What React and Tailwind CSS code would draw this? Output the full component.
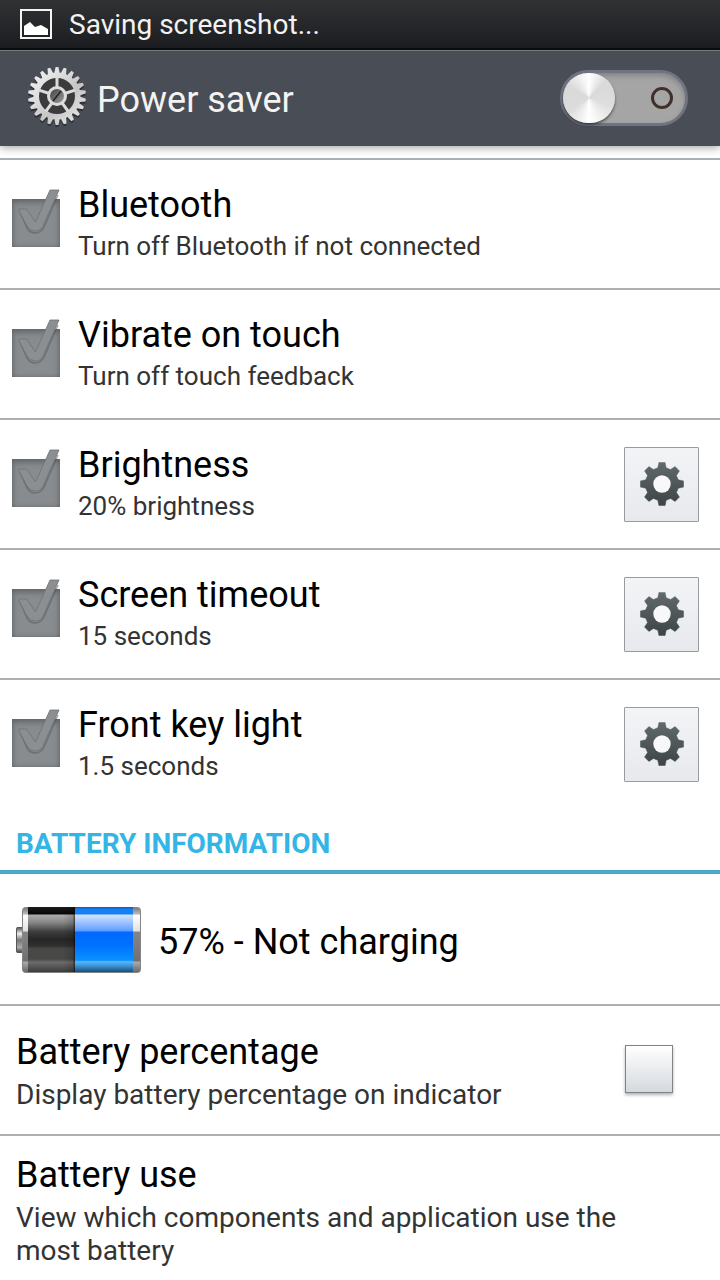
import React, { useState } from "react";

const savers = [
  { id: "bluetooth", title: "Bluetooth", summary: "Turn off Bluetooth if not connected" },
  { id: "vibrate", title: "Vibrate on touch", summary: "Turn off touch feedback" },
  { id: "brightness", title: "Brightness", summary: "20% brightness", settings: true },
  { id: "timeout", title: "Screen timeout", summary: "15 seconds", settings: true },
  { id: "keylight", title: "Front key light", summary: "1.5 seconds", settings: true },
];

// Outline of a cog centred on 0,0
// tip and root are the half widths of a tooth, in parts of one tooth's pitch
function cogPath(teeth, outer, inner, tip, root) {
  const pitch = (Math.PI * 2) / teeth;
  const points = [];
  for (let i = 0; i < teeth; i++) {
    const a = i * pitch - Math.PI / 2;
    [
      [inner, -root],
      [outer, -tip],
      [outer, tip],
      [inner, root],
    ].forEach(([r, off]) => {
      const t = a + off * pitch;
      points.push(`${(r * Math.cos(t)).toFixed(2)} ${(r * Math.sin(t)).toFixed(2)}`);
    });
  }
  return `M${points.join("L")}Z`;
}

function PictureIcon() {
  return (
    <svg viewBox="0 0 34 32" className="h-8 w-[34px]" aria-hidden="true">
      <rect x="2" y="2" width="30" height="28" fill="none" stroke="#f4f4f4" strokeWidth="2" />
      <path d="M5 27V18L11 14L16 19L22 17L29 21V27Z" fill="#fff" />
    </svg>
  );
}

function SettingsLogo() {
  return (
    <svg viewBox="-31 -31 62 62" className="mb-1 size-[62px] shrink-0" aria-hidden="true">
      <defs>
        <linearGradient id="metal" x1="0" y1="0" x2="1" y2="1">
          <stop offset="0" stopColor="#f4f4f4" />
          <stop offset="0.35" stopColor="#dedede" />
          <stop offset="0.6" stopColor="#c4c4c4" />
          <stop offset="1" stopColor="#f2f2f2" />
        </linearGradient>
        <linearGradient id="hub" x1="0" y1="0" x2="1" y2="1">
          <stop offset="0" stopColor="#444" />
          <stop offset="1" stopColor="#999" />
        </linearGradient>
      </defs>
      <path d={cogPath(22, 29, 23.5, 0.17, 0.4)} fill="#22252a" transform="translate(0 2)" opacity="0.7" />
      <path d={cogPath(22, 29, 23.5, 0.17, 0.4)} fill="url(#metal)" />
      <circle r="18" fill="#3b3b3d" />
      {[0, 72, 144, 216, 288].map((deg) => (
        <path key={deg} d="M0 -8V-19" stroke="#dcdcdc" strokeWidth="3" transform={`rotate(${deg})`} />
      ))}
      <circle r="10" fill="#dcdcdc" />
      <circle r="7" fill="url(#hub)" />
      <path d="M-4 5L4 -5" stroke="#222" strokeWidth="1.5" />
    </svg>
  );
}

function CogIcon() {
  return (
    <svg viewBox="-22 -22 44 44" className="size-11" aria-hidden="true">
      <defs>
        <linearGradient id="cog" x1="0" y1="0" x2="0" y2="1">
          <stop offset="0" stopColor="#616a6b" />
          <stop offset="1" stopColor="#3d4445" />
        </linearGradient>
      </defs>
      <path d={cogPath(8, 21.8, 16.8, 0.18, 0.32)} fill="url(#cog)" stroke="url(#cog)" strokeWidth="0.5" strokeLinejoin="round" />
      <circle r="8.7" fill="#f8f8fa" />
    </svg>
  );
}

function BatteryIcon() {
  return (
    <svg viewBox="0 0 126 68" className="h-[68px] w-[126px] shrink-0" role="img" aria-label="Battery level">
      <defs>
        <linearGradient id="case" x1="0" y1="0" x2="0" y2="1">
          <stop offset="0" stopColor="#777" />
          <stop offset="0.1" stopColor="#bbb" />
          <stop offset="0.12" stopColor="#fff" />
          <stop offset="0.36" stopColor="#e2e2e2" />
          <stop offset="0.38" stopColor="#858589" />
          <stop offset="0.82" stopColor="#707074" />
          <stop offset="0.84" stopColor="#aaa" />
          <stop offset="1" stopColor="#666" />
        </linearGradient>
        <linearGradient id="empty" x1="0" y1="0" x2="0" y2="1">
          <stop offset="0" stopColor="#1c1c1c" />
          <stop offset="0.1" stopColor="#080808" />
          <stop offset="0.13" stopColor="#aaa" />
          <stop offset="0.24" stopColor="#868686" />
          <stop offset="0.38" stopColor="#3c3c3c" />
          <stop offset="0.5" stopColor="#262626" />
          <stop offset="0.6" stopColor="#303030" />
          <stop offset="0.64" stopColor="#484846" />
          <stop offset="0.8" stopColor="#484848" />
          <stop offset="0.85" stopColor="#6c6c6c" />
          <stop offset="1" stopColor="#3c3c3c" />
        </linearGradient>
        <linearGradient id="charge" x1="0" y1="0" x2="0" y2="1">
          <stop offset="0" stopColor="#0b5cb4" />
          <stop offset="0.04" stopColor="#1680f5" />
          <stop offset="0.1" stopColor="#1680f5" />
          <stop offset="0.13" stopColor="#cfe1ff" />
          <stop offset="0.36" stopColor="#659fff" />
          <stop offset="0.39" stopColor="#0069ff" />
          <stop offset="0.6" stopColor="#0072ff" />
          <stop offset="0.82" stopColor="#0b92ff" />
          <stop offset="0.84" stopColor="#58b4ff" />
          <stop offset="0.9" stopColor="#3d97d8" />
          <stop offset="1" stopColor="#164f7c" />
        </linearGradient>
        <linearGradient id="shade" x1="0" y1="0" x2="1" y2="0">
          <stop offset="0" stopColor="#000" stopOpacity="0" />
          <stop offset="0.8" stopColor="#000" stopOpacity="0.15" />
          <stop offset="1" stopColor="#000" stopOpacity="0.6" />
        </linearGradient>
        <linearGradient id="nub" x1="0" y1="0" x2="0" y2="1">
          <stop offset="0" stopColor="#555" />
          <stop offset="0.25" stopColor="#eee" />
          <stop offset="0.5" stopColor="#777" />
          <stop offset="0.8" stopColor="#aaa" />
          <stop offset="1" stopColor="#444" />
        </linearGradient>
      </defs>
      <rect x="0.5" y="21.5" width="8" height="25" rx="1" fill="url(#nub)" stroke="#555" />
      <rect x="6.5" y="1.5" width="118" height="65" rx="3" fill="url(#case)" stroke="#858585" />
      <rect x="12" y="1" width="47" height="65" fill="url(#empty)" />
      <rect x="47" y="1" width="12" height="65" fill="url(#shade)" />
      <rect x="59" y="1" width="58" height="65" fill="url(#charge)" />
    </svg>
  );
}

function SaverRow({ saver, last }) {
  return (
    <li
      className={`flex h-[130px] items-center pl-3 pr-[21px] ${last ? "pb-0.5" : "border-b-2 border-[#abb0b4]"}`}
    >
      <div className="relative mb-0.5 size-12 shrink-0">
        <input
          id={saver.id}
          type="checkbox"
          defaultChecked
          disabled
          className="block size-12 appearance-none bg-[#888c8f] shadow-[inset_0_3px_6px_#606567,inset_0_0_4px_#707477]"
        />
        <svg viewBox="0 0 48 58" className="pointer-events-none absolute bottom-0 left-0 h-[58px] w-12" aria-hidden="true">
          <path d="M8 23L15 39Q18 44 23 44Q29 44 32 38L46 6" fill="none" stroke="#505558" strokeWidth="1.5" opacity="0.5" />
          <path
            d="M7 20H13Q15 20 16 22L23.5 33L38 1H47L31 37Q29 42 23 42Q18 42 15 37L7 22Z"
            fill="#8b8f92"
            stroke="#6c7174"
            strokeWidth="0.8"
          />
        </svg>
      </div>
      <label htmlFor={saver.id} className="ml-[18px] flex-1">
        <span className="block text-[36px] leading-[44px] text-black">{saver.title}</span>
        <span className="block text-[26px] leading-[38px] text-[#333]">{saver.summary}</span>
      </label>
      {saver.settings && (
        <button
          type="button"
          aria-label={`${saver.title} settings`}
          className="flex size-[75px] items-center justify-center rounded-[1px] border border-[#989ba2] bg-linear-to-b from-[#f3f4f6] to-[#e7e9ed]"
        >
          <CogIcon />
        </button>
      )}
    </li>
  );
}

export default function App() {
  const [enabled, setEnabled] = useState(false);
  const [showPercent, setShowPercent] = useState(false);

  return (
    <div className="min-h-screen overflow-hidden bg-white font-[Roboto,sans-serif]">
      <div className="flex h-[50px] items-center gap-4 border-b-2 border-[#0c0d0f] bg-linear-to-b from-[#303234] to-[#1c1d20] pl-[19px] text-[28px] text-[#f2f2f2]">
        <PictureIcon />
        <span className="pt-0.5">Saving screenshot...</span>
      </div>

      <header className="flex h-24 items-center border-t border-[#757b80] bg-[#494d55] pb-0.5 pl-[26px] pr-8 shadow-[0_2px_8px_rgba(0,0,0,0.35)]">
        <SettingsLogo />
        <h1 className="ml-[9px] flex-1 pt-1 text-[36px] text-[#f3f3f3]">Power saver</h1>
        <label className="relative block h-14 w-32">
          <input
            type="checkbox"
            role="switch"
            aria-label="Power saver"
            checked={enabled}
            onChange={(e) => setEnabled(e.target.checked)}
            className="peer block h-14 w-32 appearance-none rounded-full border-[3px] border-[#6f7480] bg-[#a5a5a5] shadow-[inset_0_3px_5px_#858585]"
          />
          <span className="absolute left-[3px] top-[3px] h-[50px] w-[52px] rounded-full bg-[conic-gradient(#fff,#d9d9d9_45deg,#dedede_110deg,#fff_180deg,#dcdcdc_235deg,#d9d9d9_300deg,#fff)] shadow-[0_2px_3px_rgba(0,0,0,0.5)] peer-checked:left-[73px]" />
          <span className="absolute right-[15px] top-[17px] size-[22px] rounded-full border-3 border-[#3f302a] peer-checked:hidden" />
        </label>
      </header>

      <main>
        <ul className="mt-3 border-t-2 border-[#abb0b4]">
          {savers.map((saver, i) => (
            <SaverRow key={saver.id} saver={saver} last={i === savers.length - 1} />
          ))}
        </ul>

        <h2 className="flex h-16 items-center border-b-4 border-[#4ba8cb] pl-4 pt-2 text-[28px] font-bold text-[#33b5e5]">
          BATTERY INFORMATION
        </h2>

        <div className="flex h-[132px] items-center gap-4 border-b-2 border-[#abb0b4] pl-4 pt-0.5">
          <BatteryIcon />
          <p className="pt-1 text-[36px] text-black">57% - Not charging</p>
        </div>

        <div className="flex h-[130px] items-center border-b-2 border-[#abb0b4] pb-0.5 pl-4 pr-[47px]">
          <label htmlFor="percent" className="flex-1 pt-2">
            <span className="block text-[36px] leading-[44px] text-black">Battery percentage</span>
            <span className="block text-[28px] leading-[42px] text-[#333]">
              Display battery percentage on indicator
            </span>
          </label>
          <input
            id="percent"
            type="checkbox"
            checked={showPercent}
            onChange={(e) => setShowPercent(e.target.checked)}
            className="size-12 appearance-none border border-[#808285] bg-linear-to-b from-white to-[#d5d9de] shadow-[0_2px_3px_rgba(0,0,0,0.3)] checked:to-[#33b5e5]"
          />
        </div>

        <a href="#battery-use" className="block pl-4 pr-12 pt-[17px]">
          <span className="block text-[36px] leading-[44px] text-black">Battery use</span>
          <span className="block pt-1 text-[28px] leading-[33px] text-[#333]">
            View which components and application use the most battery
          </span>
        </a>
      </main>
    </div>
  );
}
